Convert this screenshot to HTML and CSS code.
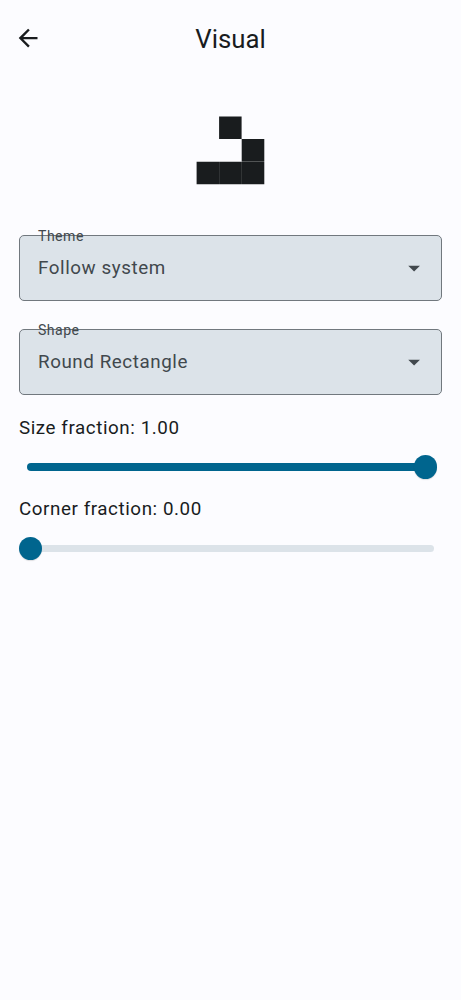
FILE: index.html
```
<!DOCTYPE html>
<html lang="en">
<head>
<meta charset="utf-8">
<title>Visual</title>
<link rel="stylesheet" href="styles.css">
</head>
<body>
<header class="bar">
  <svg class="back" viewBox="0 0 24 24"><path d="M20 11H7.83l5.59-5.59L12 4l-8 8 8 8 1.41-1.41L7.83 13H20v-2z"/></svg>
  <h1 class="title">Visual</h1>
</header>
<main class="content">
  <svg class="preview" viewBox="0 0 69 69">
    <path d="M23.1.6h22.5v22.4H23.1zM45.7 23.1h22.6v22.5H45.7zM.6 45.7h22.4v22.6H.6zM23.1 45.7h22.5v22.6H23.1zM45.7 45.7h22.6v22.6H45.7z"/>
  </svg>
  <div class="field">
    <span class="label">Theme</span>
    <span class="value">Follow system</span>
    <svg class="caret" viewBox="0 0 24 24"><path d="M7 10l5 5 5-5z"/></svg>
  </div>
  <div class="field">
    <span class="label">Shape</span>
    <span class="value">Round Rectangle</span>
    <svg class="caret" viewBox="0 0 24 24"><path d="M7 10l5 5 5-5z"/></svg>
  </div>
  <section class="setting">
    <p class="caption">Size fraction: 1.00</p>
    <div class="slider full"><span class="track"></span><span class="thumb"></span></div>
  </section>
  <section class="setting">
    <p class="caption">Corner fraction: 0.00</p>
    <div class="slider"><span class="track"></span><span class="thumb"></span></div>
  </section>
</main>
</body>
</html>
```
FILE: styles.css
```
* { box-sizing: border-box; }
body {
  margin: 0;
  min-height: 1000px;
  background: #fcfcff;
  color: #191c1e;
  font-family: Roboto, sans-serif;
}
.bar {
  display: grid;
  grid-template-columns: 28px 1fr 28px;
  align-items: center;
  height: 75px;
  padding: 0 14px;
}
.back { width: 28.2px; height: 28.2px; margin-top: 1px; fill: #191c1e; }
.title {
  margin: 4px 0 0;
  text-align: center;
  font-size: 25.8px;
  line-height: 33px;
  font-weight: 400;
}
.content {
  display: flex;
  flex-direction: column;
  padding: 41px 19px 0;
}
.preview {
  align-self: center;
  width: 69px;
  height: 69px;
  margin-bottom: 50px;
  fill: #191c1e;
}
.field {
  position: relative;
  display: flex;
  align-items: center;
  justify-content: space-between;
  height: 66px;
  margin-bottom: 28px;
  padding: 0 13px 0 18px;
  border: 1px solid #71787e;
  border-radius: 5px;
  background: #dce3e9;
  color: #41484d;
}
.label {
  position: absolute;
  left: 18px;
  top: -9px;
  font-size: 14.1px;
  line-height: 19px;
  letter-spacing: 0.47px;
}
.value, .caption {
  font-size: 18.8px;
  line-height: 28px;
  letter-spacing: 0.57px;
}
.caret { width: 28.2px; height: 28.2px; fill: #41484d; }
.setting { height: 81.5px; }
.field + .setting { height: 80.5px; margin-top: -9px; }
.caption { margin: 0; }
.slider {
  display: grid;
  align-items: center;
  height: 24px;
  margin-top: 14px;
}
.full { margin-top: 13px; }
.track, .thumb { grid-area: 1 / 1; }
.track {
  height: 7.4px;
  margin: 0 8px;
  border-radius: 4px;
  background: #dce3e9;
}
.full .track { background: #00658e; }
.thumb {
  width: 23.5px;
  height: 23.5px;
  margin-left: -0.4px;
  border-radius: 50%;
  background: #00658e;
  box-shadow: 0 1px 1px rgba(0, 0, 0, 0.12);
}
.full .thumb { justify-self: end; margin-right: 4.6px; }
```
